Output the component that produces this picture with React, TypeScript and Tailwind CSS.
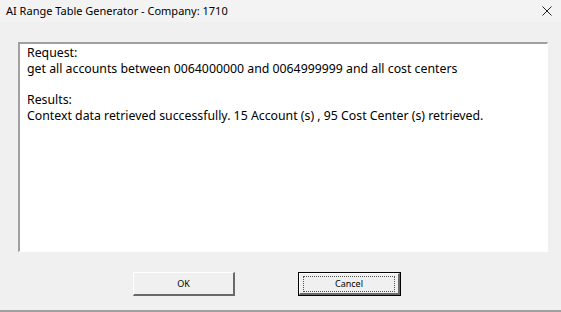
import React from 'react';

const FONT = { fontFamily: '"Noto Sans", "Open Sans", sans-serif' };

export default function App() {
  return (
    <div className="flex h-[312px] w-[561px] flex-col bg-[#f0f0f0]" style={FONT}>
      <div className="flex h-[22px] items-center justify-between bg-[#f3f3f3] pl-[6px] pr-[8px] text-[11px] text-black">
        <span>AI Range Table Generator - Company: 1710</span>
        <svg width="10" height="10" viewBox="0 0 10 10" className="mr-[1px]">
          <path d="M0.5 0.5 L9.5 9.5 M9.5 0.5 L0.5 9.5" stroke="#222" strokeWidth="1" />
        </svg>
      </div>

      <div className="flex flex-1 flex-col px-[18px] pt-[20px]">
        <div className="h-[210px] w-[530px] border-t-2 border-l-2 border-r border-b border-t-[#a0a0a0] border-l-[#a0a0a0] border-r-white border-b-white bg-white">
          <div className="px-[7px] pt-[1px] text-[12.3px] leading-[15.7px] text-black">
            <div>Request:</div>
            <div>get all accounts between 0064000000 and 0064999999 and all cost centers</div>
            <div>&nbsp;</div>
            <div>Results:</div>
            <div>Context data retrieved successfully. 15 Account (s) , 95 Cost Center (s) retrieved.</div>
          </div>
        </div>

        <div className="mt-[20px] flex gap-[63px] pl-[115px]">
          <button className="flex h-[24px] w-[102px] items-center justify-center border-t border-l border-r-2 border-b-2 border-t-white border-l-white border-r-[#696969] border-b-[#696969] bg-[#f0f0f0] text-[9px] text-black">
            OK
          </button>
          <button className="h-[24px] w-[103px] border border-black bg-[#f0f0f0] p-0">
            <div className="flex h-full w-full items-center justify-center border-t border-l border-r-2 border-b-2 border-t-white border-l-white border-r-[#696969] border-b-[#696969]">
              <div className="flex h-[16px] w-[92px] items-center justify-center border border-dotted border-[#555] text-[9px] text-black">
                Cancel
              </div>
            </div>
          </button>
        </div>

        <div className="flex-1" />
      </div>
      <div className="h-[2px] bg-[#a0a0a0]" />
    </div>
  );
}
